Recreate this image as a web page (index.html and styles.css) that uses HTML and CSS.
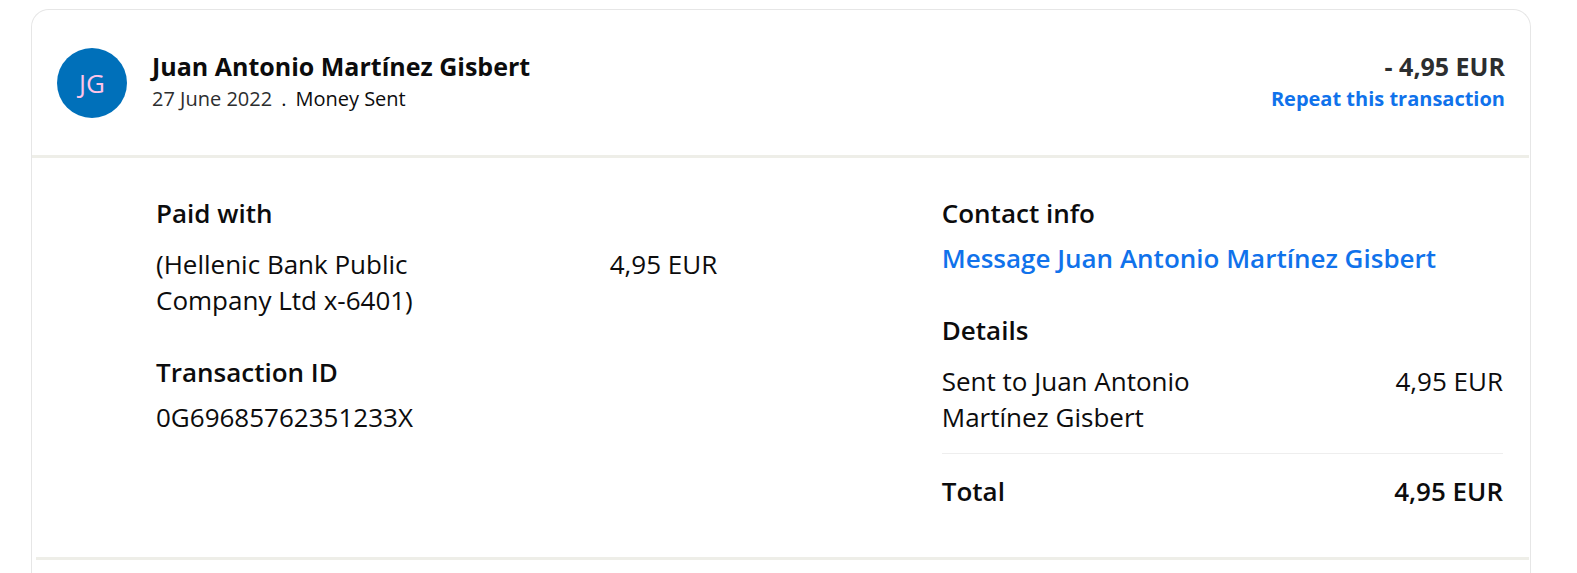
FILE: index.html
```html
<!DOCTYPE html>
<html lang="en">
<head>
<meta charset="utf-8">
<meta name="viewport" content="width=device-width, initial-scale=1">
<title>Transaction details</title>
<link rel="stylesheet" href="styles.css">
</head>
<body>
<main class="card">
  <header class="summary">
    <div class="avatar" aria-hidden="true">JG</div>
    <div class="who">
      <h1 class="name">Juan Antonio Martínez Gisbert</h1>
      <p class="meta"><time class="date" datetime="2022-06-27">27 June 2022</time><span class="dot">.</span><span>Money Sent</span></p>
    </div>
    <div class="sum">
      <p class="amount">- 4,95 EUR</p>
      <a class="link repeat" href="#">Repeat this transaction</a>
    </div>
  </header>
  <div class="body">
    <div class="column">
      <section class="block">
        <h2 class="title">Paid with</h2>
        <div class="row spaced">
          <span class="label">(Hellenic Bank Public Company Ltd x-6401)</span>
          <span class="value">4,95 EUR</span>
        </div>
      </section>
      <section class="block">
        <h2 class="title">Transaction ID</h2>
        <p class="line">0G69685762351233X</p>
      </section>
    </div>
    <div class="column">
      <section class="block">
        <h2 class="title">Contact info</h2>
        <p class="line"><a class="link" href="#">Message Juan Antonio Martínez Gisbert</a></p>
      </section>
      <section class="block">
        <h2 class="title">Details</h2>
        <div class="row spaced">
          <span class="label">Sent to Juan Antonio Martínez Gisbert</span>
          <span class="value">4,95 EUR</span>
        </div>
        <div class="row total">
          <span>Total</span>
          <span class="value">4,95 EUR</span>
        </div>
      </section>
    </div>
  </div>
</main>
</body>
</html>
```

FILE: styles.css
```css
* {
  box-sizing: border-box;
}

body {
  margin: 0;
  padding: 9px 46px 0 31px;
  min-height: 100vh;
  display: flex;
  background: #fff;
  color: #0c0c0d;
  font: 26px/36px "Open Sans", "Noto Sans", sans-serif;
}

h1, h2, p {
  margin: 0;
  font-size: inherit;
  font-weight: inherit;
}

.name,
.title {
  font-weight: 600;
}

.card {
  flex: 1;
  border: 1px solid #e6e6e6;
  border-bottom: 0;
  border-radius: 18px 18px 0 0;
}

.summary {
  display: flex;
  align-items: flex-start;
  margin-right: 1px;
  padding: 38px 24px 37px 25px;
  border-bottom: 3px solid #eeeee8;
}

.avatar {
  width: 70px;
  height: 70px;
  margin-right: 25px;
  border-radius: 50%;
  background: #0070ba;
  color: #ffc4e8;
  line-height: 70px;
  text-align: center;
}

.who {
  flex: 1;
}

.name,
.amount {
  font-size: 25px;
  font-weight: 700;
}

.meta {
  display: flex;
  gap: 9px;
  font-size: 20px;
  line-height: 30px;
}

.date,
.amount {
  color: #2c2e2f;
}

.sum {
  text-align: right;
}

.link {
  color: #1072eb;
  font-weight: 600;
  text-decoration: none;
}

.repeat {
  display: block;
  font-size: 20px;
  font-weight: 700;
  line-height: 30px;
}

.body {
  display: grid;
  grid-template-columns: 5fr 2fr 5fr;
  margin: 0 1px 0 4px;
  padding: 37px 26px 48px 120px;
  border-bottom: 3px solid #eeeee8;
}

.column {
  display: grid;
  gap: 36px;
  align-content: start;
}

.column:last-child {
  grid-column: 3;
}

.line {
  margin-top: 9px;
}

.row {
  display: flex;
  justify-content: space-between;
}

.spaced {
  margin-top: 15px;
}

.label {
  width: 50%;
}

.value {
  white-space: nowrap;
}

.total {
  margin-top: 18px;
  padding-top: 19px;
  border-top: 1px solid #eee;
  font-weight: 600;
}
```
